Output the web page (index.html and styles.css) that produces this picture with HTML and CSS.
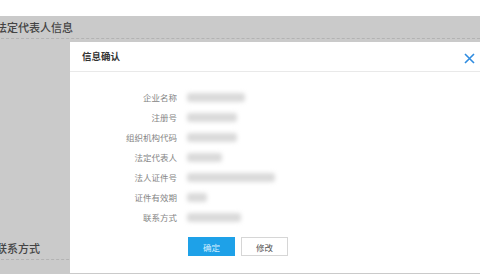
FILE: index.html
```html
<!DOCTYPE html>
<html lang="zh-CN">
<head>
  <meta charset="UTF-8">
  <title>信息确认</title>
  <link rel="stylesheet" href="styles.css">
</head>
<body>
  <div class="top-strip"></div>

  <div class="page">
    <div class="section">
      <div class="section-title">法定代表人信息</div>
      <div class="section-body"></div>
    </div>
    <div class="section">
      <div class="section-title">联系方式</div>
    </div>
  </div>

  <div class="modal">
    <div class="modal-head">
      <span class="modal-title">信息确认</span>
      <svg class="close" width="11" height="11" viewBox="0 0 11 11">
        <path d="M1 1 L10 10 M10 1 L1 10" stroke="#2f8ce0" stroke-width="1.6" fill="none"/>
      </svg>
    </div>
    <div class="modal-body">
      <div class="info">
        <span class="label">企业名称</span><span class="value"><i style="width:58px"></i></span>
        <span class="label">注册号</span><span class="value"><i style="width:50px"></i></span>
        <span class="label">组织机构代码</span><span class="value"><i style="width:50px"></i></span>
        <span class="label">法定代表人</span><span class="value"><i style="width:35px"></i></span>
        <span class="label">法人证件号</span><span class="value"><i style="width:88px"></i></span>
        <span class="label">证件有效期</span><span class="value"><i style="width:20px"></i></span>
        <span class="label">联系方式</span><span class="value"><i style="width:54px"></i></span>
      </div>
      <div class="actions">
        <button class="btn btn-primary">确定</button>
        <button class="btn">修改</button>
      </div>
    </div>
  </div>
</body>
</html>
```

FILE: styles.css
```css
* {
  box-sizing: border-box;
  margin: 0;
  padding: 0;
  font-family: "Noto Sans CJK SC", "Noto Sans", sans-serif;
}
body {
  background: #fff;
  width: 480px;
  height: 274px;
  overflow: hidden;
  position: relative;
}
.top-strip {
  height: 16px;
  background: #fff;
}
.page {
  background: #cacaca;
  height: 258px;
}
.section-title {
  height: 23px;
  line-height: 22px;
  margin-left: -4px;
  font-size: 11px;
  font-weight: 500;
  color: #444;
  border-bottom: 1px dashed #b3b3b3;
}
.section-body {
  height: 198px;
}
.modal {
  position: absolute;
  left: 70px;
  top: 42px;
  width: 420px;
  height: 231px;
  background: #fff;
}
.modal-head {
  height: 30px;
  display: flex;
  align-items: center;
  justify-content: space-between;
  padding: 0 15px 0 12px;
  border-bottom: 1px solid #e9e9e9;
}
.modal-title {
  font-size: 9.5px;
  font-weight: bold;
  color: #333;
  margin-top: -2px;
}
.close {
  margin-top: 4px;
}
.modal-body {
  padding-top: 15px;
}
.info {
  display: grid;
  grid-template-columns: 107px 1fr;
  grid-auto-rows: 20px;
  column-gap: 10px;
  align-items: center;
}
.label {
  text-align: right;
  font-size: 8.5px;
  color: #858585;
}
.value i {
  display: block;
  height: 9px;
  background: #dadada;
  border-radius: 3px;
  filter: blur(2px);
}
.actions {
  display: flex;
  gap: 6px;
  margin: 10px 0 0 118px;
}
.btn {
  width: 47px;
  height: 19px;
  font-size: 8.5px;
  color: #555;
  background: #fff;
  border: 1px solid #d6d6d6;
}
.btn-primary {
  background: #1ea1e8;
  border-color: #1ea1e8;
  color: #d6efff;
}
```
